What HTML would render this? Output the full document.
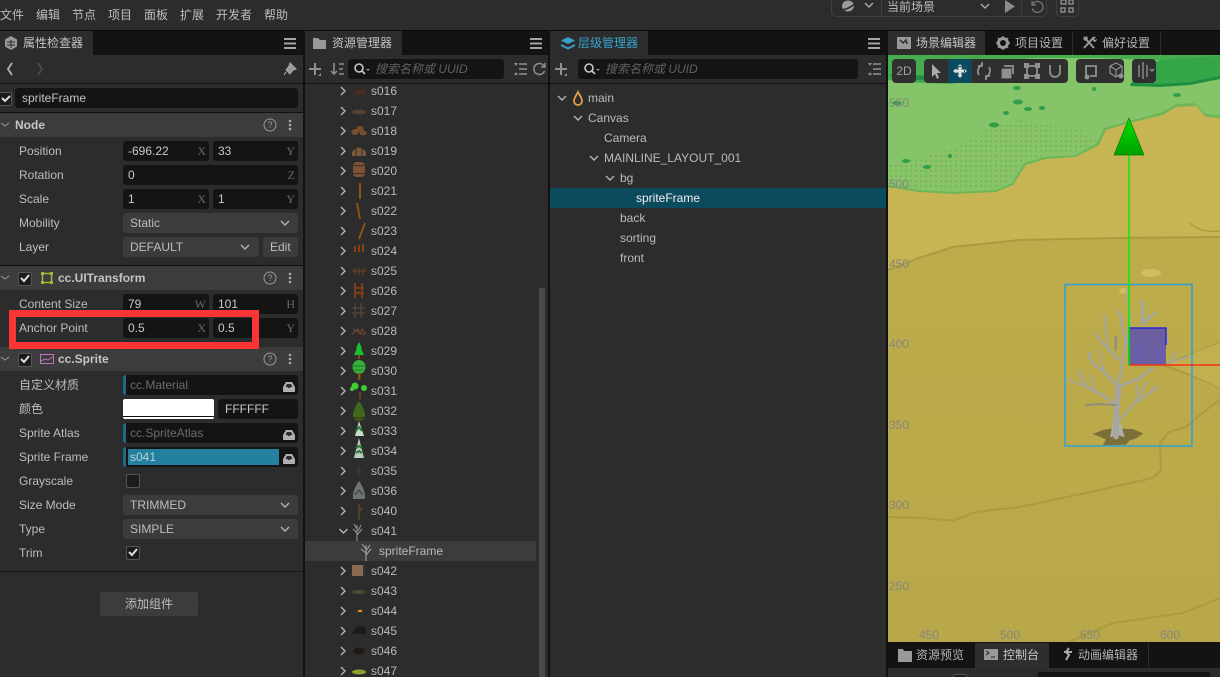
<!DOCTYPE html>
<html><head><meta charset="utf-8"><title>Editor</title>
<style>
html,body{margin:0;padding:0;width:1220px;height:677px;overflow:hidden;background:#2c2c2c}
body{position:relative;font-family:"Liberation Sans","Noto Sans CJK SC",sans-serif;font-size:12px;color:#bdbdbd}
div,span{position:absolute;box-sizing:border-box}
.t{white-space:nowrap;line-height:20px;height:20px}
.b{background:#111}
.tab{top:31px;height:24px;background:#2c2c2c}
.i{background:#141414;border-radius:3px;height:20px;line-height:20px;padding-left:5px;white-space:nowrap;color:#c8c8c8}
.u{right:3px;top:0;font-family:"Liberation Serif",serif;color:#6a6a6a;font-size:12px}
.s{background:#3c3c3c;border-radius:3px;height:20px;line-height:20px;padding-left:7px;white-space:nowrap;color:#bdbdbd}
.a{background:#141414;border-radius:3px;height:20px;line-height:20px;color:#6c6c6c;white-space:nowrap;border-left:3px solid #1d6a86;padding-left:4px}
.h{left:0;width:303px;height:24px;background:#3c3c3c;line-height:24px;font-weight:bold;color:#c4c4c4;white-space:nowrap}
.ph{font-style:italic;color:#626262;white-space:nowrap;line-height:20px}
.tool{background:#2f2f2f;border-radius:4px;top:59px;height:24px}
.cn{color:#bbb;white-space:nowrap;line-height:20px}
.lbl{color:#86867c;white-space:nowrap;line-height:14px}
</style></head><body>

<!-- top bar -->
<div class="t" style="left:0;top:5px">文件</div><div class="t" style="left:36px;top:5px">编辑</div><div class="t" style="left:72px;top:5px">节点</div><div class="t" style="left:108px;top:5px">项目</div><div class="t" style="left:144px;top:5px">面板</div><div class="t" style="left:180px;top:5px">扩展</div><div class="t" style="left:216px;top:5px">开发者</div><div class="t" style="left:264px;top:5px">帮助</div>
<div style="left:831px;top:-6px;width:216px;height:23px;border:1px solid #3f3f3f;border-radius:5px"></div>
<div style="left:881px;top:0;width:1px;height:17px;background:#3f3f3f"></div>
<div style="left:1021px;top:0;width:1px;height:17px;background:#3f3f3f"></div>
<div style="left:1056px;top:-6px;width:23px;height:23px;border:1px solid #3f3f3f;border-radius:5px"></div>
<div class="t" style="left:887px;top:-3px">当前场景</div>

<!-- panel tab rows -->
<div style="left:0;top:30px;width:1220px;height:25px;background:#131313;border-top:1px solid #0a0a0a"></div>
<div class="tab" style="left:0;width:93px"></div>
<div class="tab" style="left:305px;width:97px"></div>
<div class="tab" style="left:550px;width:98px"></div>
<div class="tab" style="left:888px;width:97px;background:#2e2e2e"></div>
<div style="left:1072px;top:31px;width:1px;height:24px;background:#2c2c2c"></div>
<div style="left:1160px;top:31px;width:1px;height:24px;background:#2c2c2c"></div>
<div class="t" style="left:23px;top:33px;color:#c4c4c4">属性检查器</div>
<div class="t" style="left:332px;top:33px;color:#c4c4c4">资源管理器</div>
<div class="t" style="left:578px;top:33px;color:#38a3cc">层级管理器</div>
<div class="t" style="left:916px;top:33px;color:#c4c4c4">场景编辑器</div>
<div class="t" style="left:1015px;top:33px;color:#b4b4b4">项目设置</div>
<div class="t" style="left:1102px;top:33px;color:#b4b4b4">偏好设置</div>

<!-- separators -->
<div class="b" style="left:303px;top:30px;width:2px;height:647px"></div>
<div class="b" style="left:548px;top:30px;width:2px;height:647px"></div>
<div class="b" style="left:886px;top:30px;width:2px;height:647px"></div>
<div class="b" style="left:0;top:83px;width:886px;height:1px"></div>

<!-- inspector -->
<div class="i" style="left:15px;top:88px;width:283px;color:#c4c4c4;padding-left:7px">spriteFrame</div>
<div class="b" style="left:0;top:112px;width:303px;height:1px"></div>
<div class="h" style="top:113px;padding-left:15px">Node</div>
<div class="t" style="left:19px;top:141px">Position</div>
<div class="i" style="left:123px;top:141px;width:86px">-696.22<span class="u">X</span></div>
<div class="i" style="left:213px;top:141px;width:85px">33<span class="u">Y</span></div>
<div class="t" style="left:19px;top:165px">Rotation</div>
<div class="i" style="left:123px;top:165px;width:175px">0<span class="u">Z</span></div>
<div class="t" style="left:19px;top:189px">Scale</div>
<div class="i" style="left:123px;top:189px;width:86px">1<span class="u">X</span></div>
<div class="i" style="left:213px;top:189px;width:85px">1<span class="u">Y</span></div>
<div class="t" style="left:19px;top:213px">Mobility</div>
<div class="s" style="left:123px;top:213px;width:175px">Static</div>
<div class="t" style="left:19px;top:237px">Layer</div>
<div class="s" style="left:123px;top:237px;width:136px">DEFAULT</div>
<div class="s" style="left:263px;top:237px;width:35px;padding-left:7px">Edit</div>

<div class="b" style="left:0;top:265px;width:303px;height:1px"></div>
<div class="h" style="top:266px;padding-left:58px">cc.UITransform</div>
<div class="t" style="left:19px;top:294px">Content Size</div>
<div class="i" style="left:123px;top:294px;width:86px">79<span class="u">W</span></div>
<div class="i" style="left:213px;top:294px;width:85px">101<span class="u">H</span></div>
<div class="t" style="left:19px;top:318px">Anchor Point</div>
<div class="i" style="left:123px;top:318px;width:86px">0.5<span class="u">X</span></div>
<div class="i" style="left:213px;top:318px;width:85px">0.5<span class="u">Y</span></div>

<div class="h" style="top:347px;padding-left:58px;height:24px">cc.Sprite</div>
<div style="left:9px;top:310px;width:250px;height:39px;border:7px solid #fb3535"></div>
<div class="t" style="left:19px;top:375px">自定义材质</div>
<div class="a" style="left:123px;top:375px;width:175px">cc.Material</div>
<div class="t" style="left:19px;top:399px">颜色</div>
<div style="left:123px;top:399px;width:91px;height:20px;background:#fff;border-radius:2px"></div>
<div style="left:123px;top:416px;width:91px;height:1px;background:#111"></div>
<div class="i" style="left:218px;top:399px;width:80px;padding-left:7px;color:#c8c8c8">FFFFFF</div>
<div class="t" style="left:19px;top:423px">Sprite Atlas</div>
<div class="a" style="left:123px;top:423px;width:175px">cc.SpriteAtlas</div>
<div class="t" style="left:19px;top:447px">Sprite Frame</div>
<div class="a" style="left:123px;top:447px;width:175px"></div>
<div style="left:128px;top:449px;width:151px;height:16px;background:#24809f;line-height:16px;padding-left:2px;color:#bcd0d8">s041</div>
<div class="t" style="left:19px;top:471px">Grayscale</div>
<div class="t" style="left:19px;top:495px">Size Mode</div>
<div class="s" style="left:123px;top:495px;width:175px">TRIMMED</div>
<div class="t" style="left:19px;top:519px">Type</div>
<div class="s" style="left:123px;top:519px;width:175px">SIMPLE</div>
<div class="t" style="left:19px;top:543px">Trim</div>
<div style="left:0;top:571px;width:303px;height:1px;background:#181818"></div>
<div style="left:100px;top:592px;width:98px;height:24px;background:#3c3c3c;border-radius:2px;text-align:center;line-height:24px;color:#bdbdbd">添加组件</div>

<!-- assets -->
<div class="i" style="left:348px;top:59px;width:156px"></div>
<div class="ph" style="left:375px;top:59px">搜索名称或 UUID</div>
<div style="left:305px;top:541px;width:231px;height:20px;background:#3c3c3c"></div>
<div style="left:539px;top:288px;width:6px;height:389px;background:#4a4a4a"></div>
<div class="cn" style="left:371px;top:81px">s016</div>
<div class="cn" style="left:371px;top:101px">s017</div>
<div class="cn" style="left:371px;top:121px">s018</div>
<div class="cn" style="left:371px;top:141px">s019</div>
<div class="cn" style="left:371px;top:161px">s020</div>
<div class="cn" style="left:371px;top:181px">s021</div>
<div class="cn" style="left:371px;top:201px">s022</div>
<div class="cn" style="left:371px;top:221px">s023</div>
<div class="cn" style="left:371px;top:241px">s024</div>
<div class="cn" style="left:371px;top:261px">s025</div>
<div class="cn" style="left:371px;top:281px">s026</div>
<div class="cn" style="left:371px;top:301px">s027</div>
<div class="cn" style="left:371px;top:321px">s028</div>
<div class="cn" style="left:371px;top:341px">s029</div>
<div class="cn" style="left:371px;top:361px">s030</div>
<div class="cn" style="left:371px;top:381px">s031</div>
<div class="cn" style="left:371px;top:401px">s032</div>
<div class="cn" style="left:371px;top:421px">s033</div>
<div class="cn" style="left:371px;top:441px">s034</div>
<div class="cn" style="left:371px;top:461px">s035</div>
<div class="cn" style="left:371px;top:481px">s036</div>
<div class="cn" style="left:371px;top:501px">s040</div>
<div class="cn" style="left:371px;top:521px">s041</div>
<div class="cn" style="left:379px;top:541px">spriteFrame</div>
<div class="cn" style="left:371px;top:561px">s042</div>
<div class="cn" style="left:371px;top:581px">s043</div>
<div class="cn" style="left:371px;top:601px">s044</div>
<div class="cn" style="left:371px;top:621px">s045</div>
<div class="cn" style="left:371px;top:641px">s046</div>
<div class="cn" style="left:371px;top:661px">s047</div>

<!-- hierarchy -->
<div class="i" style="left:578px;top:59px;width:280px"></div>
<div class="ph" style="left:605px;top:59px">搜索名称或 UUID</div>
<div style="left:550px;top:188px;width:336px;height:20px;background:#0c4b5e"></div>
<div class="cn" style="left:588px;top:88px">main</div>
<div class="cn" style="left:588px;top:108px">Canvas</div>
<div class="cn" style="left:604px;top:128px">Camera</div>
<div class="cn" style="left:604px;top:148px">MAINLINE_LAYOUT_001</div>
<div class="cn" style="left:620px;top:168px">bg</div>
<div class="cn" style="left:636px;top:188px;color:#f0f0f0">spriteFrame</div>
<div class="cn" style="left:620px;top:208px">back</div>
<div class="cn" style="left:620px;top:228px">sorting</div>
<div class="cn" style="left:620px;top:248px">front</div>

<!-- scene -->
<svg style="position:absolute;left:888px;top:55px" width="332" height="587" viewBox="888 55 332 587">
<defs>
<pattern id="dots" width="5" height="5" patternUnits="userSpaceOnUse"><circle cx="1" cy="1" r=".8" fill="#62a850"/><circle cx="3.5" cy="3.500" r=".8" fill="#a9bc5a"/></pattern>
<linearGradient id="gr" x1="0" x2="0" y1="0" y2="1"><stop offset="0" stop-color="#00e000"/><stop offset="1" stop-color="#00a000"/></linearGradient>
<linearGradient id="sand" x1="0" x2="0" y1="0" y2="1"><stop offset="0" stop-color="#bfae4d"/><stop offset="1" stop-color="#b8a849"/></linearGradient>
</defs>
<rect x="888" y="55" width="332" height="587" fill="url(#sand)"/>
<!-- upper sand -->
<path d="M888 270 L919 258 L953 247 L1019 240 L1119 238 L1220 237 L1220 100 L888 100Z" fill="#c7b553"/>
<!-- grass -->
<path d="M888 187 L919 192 L953 194 L996 192 L1013 185 L1026 165 L1046 159 L1076 157 L1099 145 L1106 130 L1129 123 L1163 115 L1176 107 L1196 106 L1206 117 L1220 118 L1220 55 L888 55Z" fill="#6fb658"/>
<path d="M888 185 L919 190 L953 192 L996 190 L1012 183 L1024 163 L1046 157 L1076 155 L1097 143 L1104 128 L1129 121 L1163 112 L1176 104 L1194 103 L1206 114 L1220 115 L1220 55 L888 55Z" fill="#85c468"/>
<!-- speckle -->
<path d="M888 165 L950 150 L985 130 L1020 120 L1080 130 L1098 142 L1076 153 L1046 155 L1024 161 L1010 182 L996 188 L953 190 L919 188 L888 183Z" fill="url(#dots)"/>
<!-- dark top greens -->
<path d="M888 55 L1220 55 L1220 60 L1150 60 L1100 58 L1040 58 L985 60 L972 70 L973 80 L950 84 L900 82 L888 80Z" fill="#45ad4e"/>
<path d="M888 75 L900 79 L950 82 L971 80 L972 71 L966 74 L930 76L900 74Z" fill="#1f8f3f"/>
<path d="M1130 85 L1140 68 L1160 60 L1220 56 L1220 79 L1190 84 L1160 86 Z" fill="#35a648"/>
<path d="M1220 79 L1190 85 L1160 87 L1130 86 L1132 83 L1160 84 L1190 82 L1220 76Z" fill="#1f8f3f"/>
<g fill="#2f9e4a">
<ellipse cx="1017" cy="88" rx="4" ry="2"/><ellipse cx="1028" cy="109" rx="4" ry="2"/><ellipse cx="1018" cy="102" rx="5" ry="2.500"/><ellipse cx="994" cy="125" rx="5" ry="2.500"/><ellipse cx="1042" cy="108" rx="3" ry="2"/><ellipse cx="1006" cy="113" rx="3" ry="2"/><ellipse cx="1094" cy="89" rx="2" ry="2"/><ellipse cx="1177" cy="95" rx="4" ry="2"/><ellipse cx="906" cy="161" rx="4" ry="2"/><ellipse cx="927" cy="167" rx="4" ry="2"/><ellipse cx="950" cy="156" rx="2" ry="2"/><ellipse cx="897" cy="103" rx="5" ry="2"/>
</g>
<!-- sand lines -->
<g fill="none" stroke="#ab9b40" stroke-width="2">
<path d="M888 270 L919 258 L953 247 L1019 240 L1119 238 L1220 237"/>
<path d="M888 517 L920 518 L953 520.5 L976 512 L1019 507 L1086 493 L1153 478 L1161 470 L1160 443 L1169 432 L1186 427 L1206 410 L1220 400"/>
<path d="M1163 365 L1203 380 L1220 388"/>
<path d="M1169 363 L1196 352 L1220 343"/>
<path d="M1069 642 L1113 623 L1183 613 L1220 598"/>
<path d="M1190 223 Q1200 233 1220 231" stroke-width="1.500"/>
</g>
<path d="M1220 343 L1196 352 L1170 364 L1203 380 L1220 388Z" fill="#c0b04f"/>
<ellipse cx="1151" cy="273" rx="10" ry="4" fill="#cfbd60"/>
<ellipse cx="1123" cy="291" rx="4" ry="3" fill="#cfbd60"/>
<!-- tree -->
<g transform="translate(886 280) scale(.33333)" style="filter:blur(.9px)">
<path d="M620 462 L650 450 L680 445 L740 447 L772 460 L750 475 L730 482 L720 494 L650 496 L660 478 Z" fill="#7c7038"/>
<path d="M672 472 L683 420 L701 420 L716 472 L694 464Z" fill="#b0b0aa"/>
<g fill="none" stroke-linecap="round" stroke="#a6a6a0">
<path d="M690 470 L692 390 L697 320" stroke-width="17"/>
<path d="M693 380 L650 345 L600 320 L578 275" stroke-width="8"/>
<path d="M600 320 L542 298" stroke-width="5"/>
<path d="M630 340 L615 282" stroke-width="5"/>
<path d="M697 320 L660 280 L620 250 L607 218" stroke-width="8"/>
<path d="M655 280 L640 210" stroke-width="5"/>
<path d="M697 320 L708 250 L720 190 L700 95" stroke-width="8"/>
<path d="M700 240 L650 190 L628 162" stroke-width="7"/>
<path d="M665 200 L655 105" stroke-width="6"/>
<path d="M688 210 L690 170" stroke-width="7" stroke="#8f8f84"/>
<path d="M697 320 L760 295 L800 265" stroke-width="8"/>
<path d="M700 420 L745 370 L815 320" stroke-width="7"/>
<path d="M750 360 L780 308" stroke-width="6"/>
<path d="M750 310 L755 345" stroke-width="4"/>
<path d="M690 375 L640 372 L600 376" stroke-width="6" stroke="#8f8f80"/>
<path d="M725 30 L732 140 L725 190" stroke-width="7"/>
<path d="M770 65 L770 130 L805 100" stroke-width="9"/>
<path d="M760 190 L765 260" stroke-width="5"/>
<path d="M840 170 L845 190" stroke-width="5"/>
<path d="M810 250 L830 200" stroke-width="6"/>
<path d="M845 248 L912 230" stroke-width="5"/>
<path d="M855 240 L870 218" stroke-width="5"/>
</g>
</g>
<!-- gizmos -->
<rect x="1065" y="284.500" width="127" height="161.500" fill="none" stroke="#2d9fd8" stroke-width="1.500"/>
<rect x="1129" y="328" width="37" height="37" fill="#3a30d8" fill-opacity=".62"/>
<path d="M1129 365V328H1166V345" fill="none" stroke="#2828d8" stroke-width="1.500"/>
<path d="M1129 365H1220" stroke="#f83018" stroke-width="1.500"/>
<path d="M1129 155V365" stroke="#00f000" stroke-width="1.500"/>
<path d="M1129 118L1114 155H1144Z" fill="url(#gr)" stroke="#0a7a0a" stroke-width=".7"/>
</svg>
<div class="lbl" style="left:889px;top:96px">550</div>
<div class="lbl" style="left:889px;top:177px">500</div>
<div class="lbl" style="left:889px;top:257px">450</div>
<div class="lbl" style="left:889px;top:337px">400</div>
<div class="lbl" style="left:889px;top:418px">350</div>
<div class="lbl" style="left:889px;top:498px">300</div>
<div class="lbl" style="left:889px;top:579px">250</div>
<div class="lbl" style="left:919px;top:628px">450</div>
<div class="lbl" style="left:1000px;top:628px">500</div>
<div class="lbl" style="left:1080px;top:628px">550</div>
<div class="lbl" style="left:1160px;top:628px">600</div>

<div class="tool" style="left:892px;width:24px"></div>
<div class="tool" style="left:924px;width:144px"></div>
<div style="left:948px;top:59px;width:24px;height:24px;background:#0c4b5e"></div>
<div class="tool" style="left:1076px;width:48px"></div>
<div class="tool" style="left:1132px;width:24px"></div>
<div class="t" style="left:892px;top:61px;width:24px;text-align:center;color:#a0a0a0;font-size:12px">2D</div>

<!-- bottom tabs -->
<div style="left:888px;top:642px;width:332px;height:26px;background:#131313"></div>
<div style="left:975px;top:643px;width:74px;height:25px;background:#2e2e2e"></div>
<div style="left:888px;top:668px;width:332px;height:9px;background:#2c2c2c"></div>
<div style="left:1148px;top:643px;width:1px;height:25px;background:#2c2c2c"></div>
<div class="t" style="left:916px;top:645px;color:#b4b4b4">资源预览</div>
<div class="t" style="left:1003px;top:645px;color:#c8c8c8">控制台</div>
<div class="t" style="left:1078px;top:645px;color:#b4b4b4">动画编辑器</div>
<div style="left:953px;top:674px;width:14px;height:10px;border:1px solid #555;background:#1e1e1e;border-radius:2px"></div>
<div style="left:1038px;top:672px;width:172px;height:10px;background:#141414;border-radius:2px"></div>

<!-- checkboxes -->
<div style="left:-3px;top:92px;width:15px;height:14px;background:#1c1c1c;border:1px solid #555;border-radius:2px"></div>
<div style="left:18px;top:272px;width:14px;height:14px;background:#1c1c1c;border:1px solid #555;border-radius:2px"></div>
<div style="left:18px;top:353px;width:14px;height:14px;background:#1c1c1c;border:1px solid #555;border-radius:2px"></div>
<div style="left:126px;top:474px;width:14px;height:14px;background:#1c1c1c;border:1px solid #555;border-radius:2px"></div>
<div style="left:126px;top:546px;width:14px;height:14px;background:#1c1c1c;border:1px solid #555;border-radius:2px"></div>

<!-- icon overlay -->
<svg style="position:absolute;left:0;top:0" width="1220" height="677" viewBox="0 0 1220 677">
<g fill="none" stroke="#b4b4b4" stroke-width="1.400">
<!-- hamburgers -->
<path d="M284 39h12M284 43.500h12M284 48h12M530 39h12M530 43.500h12M530 48h12M868 39h12M868 43.500h12M868 48h12" stroke="#a4a4a4" stroke-width="2"/>
<!-- asset chevrons -->
<path d="M341 87l4 4-4 4M341 107l4 4-4 4M341 127l4 4-4 4M341 147l4 4-4 4M341 167l4 4-4 4M341 187l4 4-4 4M341 207l4 4-4 4M341 227l4 4-4 4M341 247l4 4-4 4M341 267l4 4-4 4M341 287l4 4-4 4M341 307l4 4-4 4M341 327l4 4-4 4M341 347l4 4-4 4M341 367l4 4-4 4M341 387l4 4-4 4M341 407l4 4-4 4M341 427l4 4-4 4M341 447l4 4-4 4M341 467l4 4-4 4M341 487l4 4-4 4M341 507l4 4-4 4M341 567l4 4-4 4M341 587l4 4-4 4M341 607l4 4-4 4M341 627l4 4-4 4M341 647l4 4-4 4M341 667l4 4-4 4"/>
<path d="M339.500 529l4 4 4-4"/>
<!-- hierarchy chevrons -->
<path d="M558 96l4 4 4-4M574 116l4 4 4-4M590 156l4 4 4-4M606 176l4 4 4-4"/>
<!-- select chevrons -->
<path d="M281 221l4 4 4-4M241 245l4 4 4-4M281 503l4 4 4-4M281 527l4 4 4-4"/>
<!-- section chevrons -->
<path d="M1 123l4 3 4-3M1 276l4 3 4-3M1 357l4 3 4-3" stroke="#888" stroke-width="1.200"/>
<!-- nav -->
<path d="M12 63l-4 6 4 6" stroke="#aaa" stroke-width="2"/>
<path d="M38 63l4 6-4 6" stroke="#4c4c4c" stroke-width="2"/>
<!-- checks -->
<path d="M2 98l3 3 5-5M21 278l3 3 5-6M21 359l3 3 5-6M129 552l3 3 5-6" stroke="#ddd" stroke-width="2"/>
<!-- help -->
<g stroke="#999" stroke-width="1"><circle cx="270" cy="125" r="6"/><circle cx="270" cy="278" r="6"/><circle cx="270" cy="359" r="6"/></g>
<!-- top chevrons -->
<path d="M865 3l4 4 4-4M981 4l4 4 4-4" stroke="#aaa"/>
<path d="M1032 1v4h4M1032.500 4.500a5.500 5.500 0 1 1-.3 4" stroke="#777" stroke-width="1.300"/>
</g>
<g font-family="'Liberation Sans',sans-serif" font-size="9" fill="#999" text-anchor="middle"><text x="270" y="128">?</text><text x="270" y="281">?</text><text x="270" y="362">?</text></g>
<g fill="#aaa"><circle cx="290" cy="121" r="1.300"/><circle cx="290" cy="125" r="1.300"/><circle cx="290" cy="129" r="1.300"/><circle cx="290" cy="274" r="1.300"/><circle cx="290" cy="278" r="1.300"/><circle cx="290" cy="282" r="1.300"/><circle cx="290" cy="355" r="1.300"/><circle cx="290" cy="359" r="1.300"/><circle cx="290" cy="363" r="1.300"/></g>
<!-- tab icons -->
<path d="M11 36l6 3.500v7L11 50l-6-3.500v-7Z" fill="#999"/><path d="M7 42h8M7 45h8M11 40v8" stroke="#2c2c2c" stroke-width="1"/>
<path d="M313 38h5l2 2h6v9h-13Z" fill="#999"/>
<path d="M568 37l7 3.500-7 3.500-7-3.500ZM561 44l7 3.500 7-3.500v2l-7 3.500-7-3.500Z" fill="#38a3cc"/>
<path d="M897 37h14v12h-14Z" fill="#999"/><path d="M900 40l3 3 3-3 1 4" stroke="#2e2e2e" fill="none" stroke-width="1.500"/>
<circle cx="1003" cy="43" r="4.500" fill="none" stroke="#999" stroke-width="3"/><path d="M1003 36v14M996 43h14M998 38l10 10M1008 38l-10 10" stroke="#999" stroke-width="1.500" stroke-dasharray="2 10"/>
<path d="M1084 37l10 11M1094 37l-10 11" stroke="#999" stroke-width="2"/><path d="M1083 39l4-3 1 3-3 2ZM1092 39a3 3 0 0 1 4-2l-2 2 1 1 2-1a3 3 0 0 1-3 3Z" fill="#999"/>
<path d="M898 649h5l1 2h8v11h-14Z" fill="#999"/>
<rect x="984" y="649" width="14" height="11" fill="#999"/><path d="M986 651l3 2-3 2M991 657h4" stroke="#222" fill="none"/>
<path d="M1069 648l-3 4 3 3-3 5M1064 652h8" stroke="#aaa" stroke-width="2" fill="none"/>
<!-- top icons -->
<ellipse cx="848" cy="6" rx="6" ry="5.500" fill="#999"/><path d="M840 10q8 0 16-7" stroke="#2c2c2c" stroke-width="1.500" fill="none"/>
<path d="M1005 0V13L1015 6.500L1005 0Z" fill="#8c8c8c"/>
<path d="M1061 0h5v4h-5ZM1069 0h4v4h-4ZM1061 8h4v4h-4ZM1069 8h4v4h-4Z" fill="none" stroke="#888" stroke-width="1.500"/>
<!-- pin -->
<path d="M290 63l6 6-3 1-3 4-4-4 3-4ZM286 72l-2 3" fill="#999" stroke="#aaa" stroke-width="1"/>
<!-- asset toolbar -->
<g fill="none" stroke="#909090" stroke-width="2">
<path d="M315 63v12M309 69h12M561 63v12M555 69h12"/>
<path d="M334 63v11M331 71l3 3 3-3M339 64h5M339 69h4M339 74h5" stroke-width="1.500"/>
<path d="M519 64h8M519 69h8M519 74h8M873 64h8M873 69h8M873 74h8" stroke-width="1.500"/>
<path d="M544 66a5.500 5.500 0 1 0 .5 5M545 63v4h-4" stroke-width="1.500"/>
</g>
<path d="M514 63h4l-2 3ZM514 75h4l-2-3ZM868 63h4l-2 3ZM868 75h4l-2-3ZM321 73v3h-3ZM567 73v3h-3Z" fill="#909090"/>
<g fill="none" stroke="#c8c8c8" stroke-width="1.600"><circle cx="359" cy="68" r="4"/><path d="M362 71l3 3"/><circle cx="589" cy="68" r="4"/><path d="M592 71l3 3"/></g>
<path d="M366 69h4l-2 2ZM596 69h4l-2 2Z" fill="#999"/>
<!-- main flame -->
<path d="M578 92c-2 4-4 6-4 9a4 4 0 0 0 8 0c0-3-2-5-4-9Z" fill="none" stroke="#e0a040" stroke-width="1.800"/>
<!-- component icons -->
<g fill="none" stroke="#a6b53a" stroke-width="1.500"><rect x="42.500" y="273.500" width="9" height="9"/></g>
<path d="M41 272h3v3h-3ZM50 272h3v3h-3ZM41 281h3v3h-3ZM50 281h3v3h-3Z" fill="#a6b53a"/>
<rect x="40.500" y="354.500" width="13" height="9" fill="none" stroke="#c272c2" stroke-width="1"/><path d="M41 361l4-2 3 1 5-3" stroke="#c272c2" fill="none"/>
<!-- tray icons -->
<g fill="#b0b0b0"><path d="M283 391v-4l3-5h6l3 5v4a1 1 0 0 1-1 1h-10a1 1 0 0 1-1-1Z"/><path d="M283 439v-4l3-5h6l3 5v4a1 1 0 0 1-1 1h-10a1 1 0 0 1-1-1Z"/><path d="M283 463v-4l3-5h6l3 5v4a1 1 0 0 1-1 1h-10a1 1 0 0 1-1-1Z"/></g>
<path d="M285.500 387l1.500-3h4l1.500 3h-2l-.5 1h-2l-.5-1ZM285.500 435l1.500-3h4l1.500 3h-2l-.5 1h-2l-.5-1ZM285.500 459l1.500-3h4l1.500 3h-2l-.5 1h-2l-.5-1Z" fill="#2a2a2a"/>
<!-- scene toolbar icons -->
<path d="M932 64v13l3-3 2 5 2-1-2-5h4Z" fill="#aaa"/>
<path d="M960 64l-2.500 3h5ZM960 78l-2.500-3h5ZM953 71l3-2.500v5ZM967 71l-3-2.500v5Z M958.500 66h3v10h-3Z M955 69.500h10v3h-10Z" fill="#e0e0e0"/>
<g fill="none" stroke="#909090" stroke-width="1.800">
<path d="M979 75a7 7 0 0 1 3-10M989 67a7 7 0 0 1-3 10M982 62v4h-4M986 80v-4h4"/>
<rect x="1002.500" y="69.500" width="8" height="8" fill="#909090"/><path d="M1004 66h9v8"/>
<rect x="1027" y="66" width="10" height="10"/>
<path d="M1050 65v7a5 5 0 0 0 10 0v-7"/>
<path d="M1086 75v-9h10v10h-6"/>
<path d="M1110 66l6-3 6 3v7l-6 4-6-4ZM1116 70v6M1110 66l6 4 6-4" stroke-width="1.200"/>
<path d="M1139 65v12M1143 62v17M1147 65v12M1150 69l2 2 2-2" stroke-width="1.400"/>
</g>
<path d="M1024 63h5v5h-5ZM1035 63h5v5h-5ZM1024 74h5v5h-5ZM1035 74h5v5h-5Z" fill="#909090"/>
<circle cx="1087" cy="77" r="2.500" fill="#909090"/><circle cx="1121" cy="76" r="2.500" fill="#909090"/>

<!-- sprite icons -->
<g style="filter:blur(.35px)">
<path d="M352 95l4-4 3-3 2 2 3-2 2 7Z" fill="#4a2c26"/>
<ellipse cx="359" cy="112" rx="7" ry="2.500" fill="#5a4030"/>
<g fill="#77502f"><ellipse cx="355" cy="132" rx="3.500" ry="3"/><ellipse cx="360" cy="129" rx="3.500" ry="3"/><ellipse cx="363" cy="133" rx="3.500" ry="2.500"/></g>
<path d="M352 152q7-9 14 0v4h-14Z" fill="#7a5a3c"/><path d="M356 146v10M362 146v10" stroke="#3a2a1c"/>
<rect x="353" y="162" width="12" height="15" rx="4" fill="#7b5236"/><rect x="353" y="165" width="12" height="1" fill="#443020"/><rect x="353" y="173" width="12" height="1" fill="#443020"/>
<g fill="none" stroke="#8a5510" stroke-width="2"><path d="M360 183v16"/><path d="M357 203l3 16"/><path d="M365 223l-6 16"/><path d="M355 246v6M359 245v7M363 244v8" stroke="#8a4010"/></g>
<path d="M352 271h14M355 268v7M359 268v7M363 268v7" stroke="#5f3a28" fill="none" stroke-width="1.500"/>
<path d="M355 283v15M362 283v15M354 288h10M354 293h10" stroke="#7a3d18" fill="none" stroke-width="2"/>
<path d="M355 303v15M361 303v15M352 308h13M352 313h13" stroke="#55403a" fill="none" stroke-width="1.500"/>
<path d="M352 334l6-5 2 5 2-5 4 5M353 329l12 6" stroke="#6a4830" fill="none" stroke-width="1.200"/>
<path d="M359 342l-3 6h1l-3 7h10l-3-7h1Z" fill="#18c030"/><rect x="358" y="355" width="2" height="4" fill="#7a4a10"/>
<ellipse cx="359" cy="367" rx="6.500" ry="7" fill="#35b03a"/><path d="M353 366h12M354 370h10" stroke="#1f7a28"/><rect x="358" y="373" width="2.500" height="7" fill="#8a5010"/>
<circle cx="355" cy="386" r="3.500" fill="#3ed030"/><circle cx="364" cy="388" r="3" fill="#3ed030"/><circle cx="352" cy="389" r="2" fill="#3ed030"/><path d="M360 392v7" stroke="#6a4010" stroke-width="2"/>
<path d="M359 401q-7 10-6 16h12q1-6-6-16Z" fill="#3f6a1c"/><ellipse cx="359" cy="419" rx="5" ry="2" fill="#40501c"/>
<path d="M359 421l-4 15h9Z" fill="#c8dcc8"/><path d="M356 431l3-4 3 4" stroke="#2a7a3a" fill="none" stroke-width="2"/>
<path d="M359 438l-5 20h10Z" fill="#b8ccbc"/><path d="M356 448l3-2 3 2M356 453l3-2 3 2" stroke="#2a7a3a" fill="none" stroke-width="2"/>
<path d="M359 465v12M356 470l3 3 3-3" stroke="#3a3a3a" fill="none"/>
<path d="M359 481q-7 10-6 18h12q1-8-6-18Z" fill="#6d7572"/><path d="M355 495l4-5 4 5" stroke="#333" fill="none"/>
<path d="M359 520v-16M359 512l3-4" stroke="#5a4a2c" stroke-width="1.500" fill="none"/>
<path d="M357 541v-16M357 533l-4-4M357 535l5-6M354 524l3 5M361 525l-3 6" stroke="#999" fill="none"/>
<path d="M366 561v-16M366 553l-5-4M366 555l5-6M362 544l4 5M370 545l-4 6" stroke="#aaa" fill="none"/>
<rect x="352" y="565" width="11" height="11" fill="#8a6a50"/><rect x="363" y="565" width="2.500" height="11" fill="#333"/>
<ellipse cx="359" cy="592" rx="7" ry="2" fill="#45502c"/>
<path d="M353 613l6-4 1-3 2 3 3 4Z" fill="#333"/><rect x="358" y="610" width="4" height="2" fill="#e08a20"/>
<path d="M352 634q2-8 9-8q5 0 5 4v4Z" fill="#1e1a18"/>
<ellipse cx="359" cy="651" rx="6" ry="3.500" fill="#201a16"/>
<ellipse cx="359" cy="672" rx="7" ry="2.500" fill="#8aa030"/>
</g>
</svg>
</body></html>
